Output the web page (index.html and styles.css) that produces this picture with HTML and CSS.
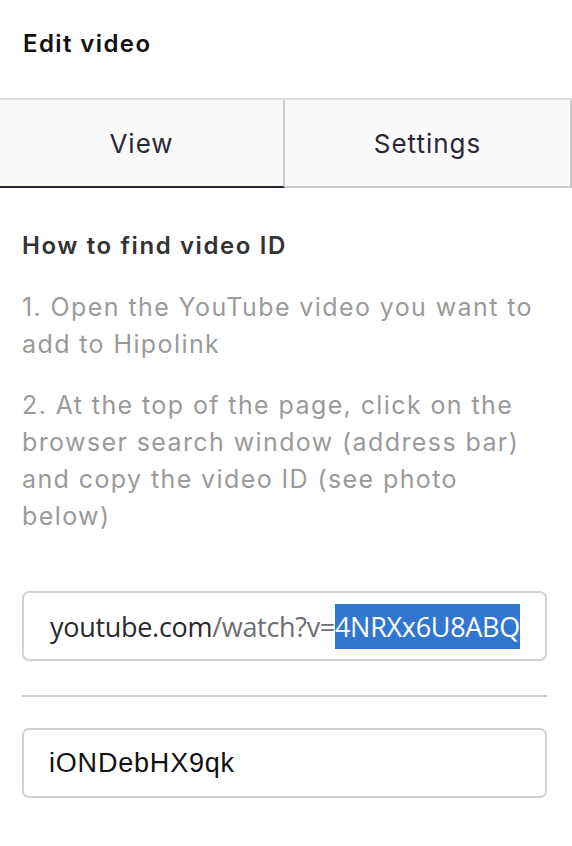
FILE: index.html
```html
<!DOCTYPE html>
<html lang="en">
<head>
<meta charset="utf-8">
<title>Edit video</title>
<link rel="stylesheet" href="styles.css">
</head>
<body>
<div class="panel">
  <header class="header">
    <h1 class="title">Edit video</h1>
  </header>
  <nav class="tabs">
    <div class="tab tab-active">View</div>
    <div class="tab">Settings</div>
  </nav>
  <main class="content">
    <h2 class="subtitle">How to find video ID</h2>
    <p class="step">1. Open the YouTube video you want to add to Hipolink</p>
    <p class="step">2. At the top of the page, click on the browser search window (address bar) and copy the video ID (see photo below)</p>
    <div class="shot">
      <span class="shot-host">youtube.com</span><span class="shot-path">/watch?v=</span><span class="shot-id">4NRXx6U8ABQ</span>
    </div>
    <hr class="divider">
    <div class="field">iONDebHX9qk</div>
  </main>
</div>
</body>
</html>
```

FILE: styles.css
```css
* { box-sizing: border-box; }
html, body { margin: 0; padding: 0; background: #ffffff; }
body { font-family: Inter, "Noto Sans", sans-serif; }

.panel { width: 572px; }

.header {
  height: 98px;
  padding: 29px 23px 0;
}
.title {
  margin: 0;
  font-size: 24px;
  line-height: 30px;
  font-weight: 600;
  color: #111111;
  letter-spacing: 1.4px;
}

.tabs {
  display: grid;
  grid-template-columns: 285px 287px;
  border-top: 2px solid #dcdcdc;
  background: #fafafa;
}
.tab {
  height: 88px;
  display: flex;
  align-items: center;
  justify-content: center;
  font-size: 26px;
  letter-spacing: 1px;
  color: #2a2835;
  border-bottom: 2px solid #cccccc;
  border-right: 2px solid #cccccc;
}
.tab-active {
  border-bottom-color: #2a2638;
}

.content {
  padding: 43px 25px 0 22px;
}
.subtitle {
  margin: 0;
  font-size: 24px;
  line-height: 30px;
  font-weight: 600;
  color: #333333;
  letter-spacing: 1.6px;
}
.step {
  margin: 28px 0 0;
  font-size: 25px;
  line-height: 37px;
  letter-spacing: 1.4px;
  color: #9a9a9a;
}
.step + .step { margin-top: 24px; }
.shot {
  margin-top: 56px;
  height: 70px;
  border: 2px solid #d2d2d2;
  border-radius: 7px;
  display: flex;
  align-items: center;
  padding-left: 26px;
  font-family: "Open Sans", "Noto Sans", sans-serif;
  font-size: 27px;
  letter-spacing: -0.3px;
}
.shot-host { color: #2a2a2a; }
.shot-path { color: #6e6e6e; }
.shot-id {
  background: #3176d1;
  color: #ffffff;
  line-height: 45px;
}
.divider {
  margin: 34px 0 0;
  border: 0;
  border-top: 2px solid #cccccc;
}
.field {
  margin-top: 31px;
  height: 70px;
  border: 2px solid #d2d2d2;
  border-radius: 7px;
  display: flex;
  align-items: center;
  padding-left: 25px;
  font-family: "Liberation Sans", sans-serif;
  font-size: 27px;
  letter-spacing: 0.8px;
  color: #111111;
}
```
